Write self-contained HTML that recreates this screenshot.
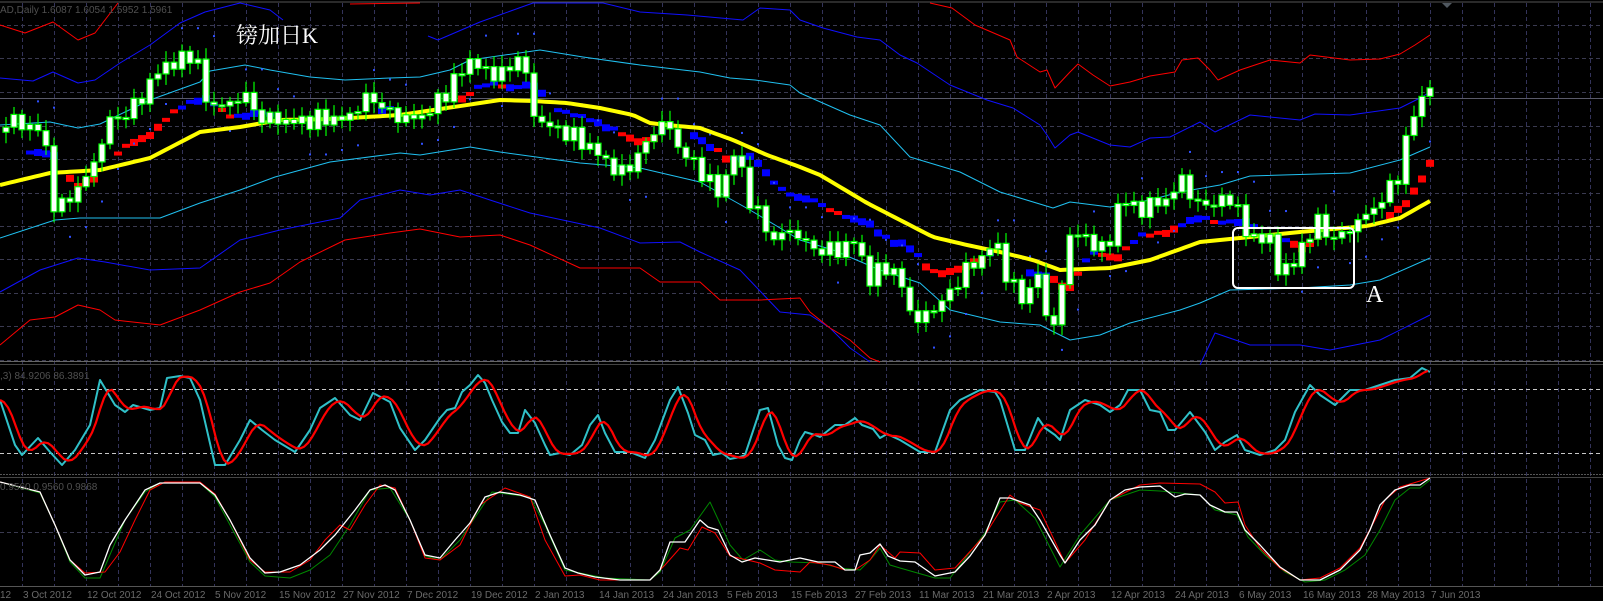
<!DOCTYPE html>
<html><head><meta charset="utf-8">
<style>
html,body{margin:0;padding:0;background:#000;width:1603px;height:601px;overflow:hidden}
svg{display:block}
</style></head>
<body>
<svg id="s" width="1603" height="601" viewBox="0 0 1603 601" xmlns="http://www.w3.org/2000/svg" font-family="Liberation Sans, sans-serif">
<rect width="1603" height="601" fill="#000"/>
<g id="grid"></g>
<line x1="0" y1="2" x2="1603" y2="2" stroke="#555" stroke-width="1"/>
<line x1="0" y1="98.5" x2="1603" y2="98.5" stroke="#5a5a6a" stroke-width="1"/>
<line x1="0" y1="361.5" x2="1603" y2="361.5" stroke="#666" stroke-width="1"/>
<line x1="0" y1="364.5" x2="1603" y2="364.5" stroke="#444" stroke-width="1"/>
<line x1="0" y1="474.5" x2="1603" y2="474.5" stroke="#555" stroke-width="1" stroke-dasharray="2,1"/>
<line x1="0" y1="477.5" x2="1603" y2="477.5" stroke="#444" stroke-width="1"/>
<line x1="0" y1="586.5" x2="1603" y2="586.5" stroke="#555" stroke-width="1"/>
<line x1="0" y1="389.5" x2="1603" y2="389.5" stroke="#c8c8c8" stroke-width="1" stroke-dasharray="4,3"/>
<line x1="0" y1="453.5" x2="1603" y2="453.5" stroke="#c8c8c8" stroke-width="1" stroke-dasharray="4,3"/>
<polygon points="1442,3 1452,3 1447,8" fill="#505860"/>
<g id="main"></g>
<text x="0" y="13" font-size="10" fill="#505050">AD,Daily  1.6087  1.6054  1.5952  1.5961</text>
<text x="0" y="379" font-size="10" fill="#505050">,3) 84.9206 86.3891</text>
<text x="0" y="490" font-size="10" fill="#505050">0.9560 0.9560 0.9868</text>
<text x="236" y="43" font-size="22" fill="#fff" style="font-family:'Liberation Serif','Noto Serif CJK SC',serif">镑加日K</text>
<text x="1366" y="302" font-size="24" fill="#fff" style="font-family:'Liberation Serif',serif">A</text>
<rect x="1233" y="228" width="121" height="60" rx="5" fill="none" stroke="#fff" stroke-width="2"/>
<g id="dates" font-size="10" fill="#6a6a6a"></g>
</svg>
<script>
var NS="http://www.w3.org/2000/svg";
function el(p,t,a){var e=document.createElementNS(NS,t);for(var k in a)e.setAttribute(k,a[k]);p.appendChild(e);return e;}
var G=document.getElementById('grid'),M=document.getElementById('main'),D=document.getElementById('dates');
for(var x=22;x<1603;x+=32){el(G,'line',{x1:x+.5,y1:3,x2:x+.5,y2:586,stroke:'#33335a','stroke-dasharray':'4,3'});}
[25,58,92,126,159,193,226,259,293,326,360,532].forEach(function(y){el(G,'line',{x1:0,y1:y+.5,x2:1603,y2:y+.5,stroke:'#3a3a50','stroke-dasharray':'4,3'});});
var dl=["3 Oct 2012","12 Oct 2012","24 Oct 2012","5 Nov 2012","15 Nov 2012","27 Nov 2012","7 Dec 2012","19 Dec 2012","2 Jan 2013","14 Jan 2013","24 Jan 2013","5 Feb 2013","15 Feb 2013","27 Feb 2013","11 Mar 2013","21 Mar 2013","2 Apr 2013","12 Apr 2013","24 Apr 2013","6 May 2013","16 May 2013","28 May 2013","7 Jun 2013"];
el(D,'text',{x:0,y:598}).textContent="12";
dl.forEach(function(t,i){var e=el(D,'text',{x:22+64*i+1,y:598});e.textContent=t;});
function P(a,c,w,p){var s=[];for(var i=0;i<a.length;i+=2)s.push(a[i]+','+a[i+1]);el(p||M,'polyline',{points:s.join(' '),fill:'none',stroke:c,'stroke-width':w,'stroke-linejoin':'round'});}
function interp(a,x){if(x<=a[0])return a[1];for(var i=0;i<a.length-2;i+=2){if(x<=a[i+2]){var t=(x-a[i])/(a[i+2]-a[i]);return a[i+1]+t*(a[i+3]-a[i+1]);}}return a[a.length-1];}
P([0,25,25,33,53,22,78,40,95,33,108,16,118,3],'#ff0000',1);
P([350,4,420,3],'#ff0000',1);
P([930,3,952,8,975,25,1010,40,1017,57,1040,72,1047,70,1055,88,1070,72,1078,64,1093,75,1110,86,1130,82,1150,76,1175,72,1182,60,1198,58,1210,70,1218,80,1240,70,1270,60,1300,63,1310,55,1350,60,1380,59,1400,54,1415,45,1430,35],'#ff0000',1);
P([0,78,33,81,53,72,78,83,95,80,120,63,150,45,180,23,205,12,240,3,270,10,283,20],'#1010ff',1);
P([428,36,438,40,480,22,533,3,603,3,640,12,687,15,743,20,760,8,790,10,800,20,823,28,857,37,880,40,900,55,917,63,950,85,987,100,1013,108,1040,125,1047,135,1055,148,1070,135,1078,132,1110,145,1130,147,1150,138,1170,137,1200,122,1215,132,1250,115,1300,120,1315,114,1350,115,1400,108,1420,98,1430,92],'#1010ff',1);
P([0,125,50,122,78,128,100,124,150,100,200,82,210,71,245,65,270,70,310,77,345,80,390,78,420,77,450,70,470,60,540,50,583,57,640,65,700,72,730,78,755,80,790,85,800,93,850,115,880,125,910,157,960,172,1000,192,1053,208,1070,202,1110,207,1150,200,1180,192,1220,185,1250,176,1350,173,1400,160,1430,147],'#20c0f0',1);
P([0,238,55,220,80,218,160,218,200,203,240,190,275,177,330,162,400,153,420,155,470,147,500,152,580,163,640,168,700,182,750,210,800,240,833,250,880,270,920,283,950,310,1000,322,1040,325,1070,340,1100,335,1130,323,1180,310,1200,303,1230,290,1300,288,1350,285,1380,280,1430,258],'#20c0f0',1);
P([0,292,40,270,78,258,105,262,150,270,200,268,240,240,280,230,340,218,360,200,400,190,430,195,460,190,490,200,530,213,600,228,640,243,680,242,700,252,740,270,780,312,810,315,830,328,850,348,870,362],'#1010ff',1);
P([1200,365,1215,333,1250,345,1300,345,1330,350,1380,340,1430,315],'#1010ff',1);
P([0,345,30,320,55,317,78,305,100,310,115,320,160,325,200,310,240,292,270,283,300,262,345,240,390,233,420,229,460,237,500,235,530,245,580,268,640,268,660,282,700,282,720,300,760,300,800,298,810,312,830,328,850,340,870,358,880,362],'#ff0000',1);
var C=[5,118,20,125,40,128,48,160,55,210,65,205,75,190,85,180,95,160,110,120,125,115,140,100,155,75,165,65,180,62,195,50,205,100,215,105,230,105,245,92,255,115,275,120,300,122,325,118,345,120,370,95,385,110,400,118,420,118,440,100,455,80,470,60,490,75,510,70,522,45,530,110,545,125,560,130,580,140,600,155,620,175,635,160,655,130,665,120,680,150,700,170,720,195,735,150,750,200,773,240,790,230,815,250,840,250,855,240,870,280,885,265,900,280,915,325,930,310,945,300,955,285,965,270,980,260,995,240,1010,285,1025,300,1040,270,1047,325,1055,320,1062,290,1070,232,1078,235,1094,245,1110,245,1118,205,1127,200,1134,210,1150,205,1166,200,1182,180,1198,205,1206,205,1222,200,1238,205,1247,240,1262,235,1271,245,1279,270,1294,265,1302,245,1318,222,1334,240,1350,228,1366,215,1382,200,1398,175,1414,112,1430,85];
var MA=[0,185,50,173,100,170,150,158,200,132,240,127,280,120,333,119,400,115,467,105,500,100,533,101,567,103,600,108,633,115,650,123,667,125,700,128,733,140,767,155,800,167,820,175,867,203,933,237,967,245,1000,252,1033,260,1060,270,1110,268,1150,260,1200,242,1300,232,1367,226,1400,218,1430,201];
var closes=[],xs=[];
for(var x=6;x<=1430;x+=8){xs.push(x);closes.push(interp(C,x)+6*Math.sin(x*0.37)+4*Math.sin(x*1.3));}
for(var i=3;i<xs.length;i++){var x=xs[i];var sm=(closes[i-1]+closes[i-2]+closes[i-3])/3;var ma=interp(MA,x);var y=(sm*0.45+ma*0.55);var up=interp(C,x+16)<interp(C,x-16);
 if(Math.abs(sm-ma)>12) el(M,'rect',{x:x-4,y:y-3,width:8,height:(Math.abs(interp(C,x+8)-interp(C,x-8))>12?7:4),fill:up?'#ff0000':'#0000ff'});
 if(i%2==0){var dy=up?Math.max(closes[i],closes[i-1],closes[i-2])+24:Math.min(closes[i],closes[i-1],closes[i-2])-24;
 el(M,'rect',{x:x-1,y:dy,width:2,height:2,fill:'#3050ff'});}}
P((function(){var a=[];for(var x=0;x<=1430;x+=5)a.push(x,interp(MA,x));return a;})(),'#ffff00',4);
for(var i=0;i<xs.length;i++){var x=xs[i],c=closes[i],o=i?closes[i-1]:c+5;var t=Math.min(o,c),b=Math.max(o,c);if(b-t<2){b=t+2;}
 var h=t-4-7*Math.abs(Math.sin(x*0.71)),l=b+4+7*Math.abs(Math.cos(x*0.53));
 el(M,'line',{x1:x,y1:h,x2:x,y2:l,stroke:'#00ff00','stroke-width':1.2});
 el(M,'rect',{x:x-3,y:t,width:6,height:b-t,fill:'#fff',stroke:'#00ff00','stroke-width':1.2});}
var CY=[0,400,15,445,22,455,38,438,50,452,62,465,75,450,90,425,100,380,115,405,125,412,133,405,150,410,160,408,167,378,180,376,190,378,200,400,215,465,225,465,240,440,250,420,262,430,275,440,295,452,310,430,320,408,335,398,350,415,360,420,373,393,390,402,400,428,415,450,425,440,440,418,447,410,455,408,462,392,470,385,478,375,485,383,492,400,502,422,510,433,518,433,525,410,535,423,545,445,550,455,560,453,570,455,582,445,590,425,598,415,605,433,615,452,630,452,645,458,655,440,670,400,678,387,688,413,695,435,705,440,713,455,722,453,730,459,740,457,745,455,755,425,760,410,768,408,778,445,785,458,792,460,800,440,805,432,815,435,820,437,835,425,845,425,855,418,862,425,873,429,880,438,887,434,900,440,920,452,935,452,950,410,960,400,980,390,995,392,1000,400,1015,450,1025,450,1038,418,1045,428,1055,435,1060,440,1070,410,1085,400,1100,405,1110,412,1120,405,1128,390,1140,390,1150,410,1160,412,1168,430,1175,430,1190,412,1205,432,1215,450,1225,442,1237,435,1245,450,1260,455,1275,450,1285,440,1295,412,1310,385,1320,395,1335,405,1350,390,1365,390,1380,385,1395,380,1410,378,1422,368,1430,372];
P(CY,'#30c0c8',2);
var R=[];for(var x=0;x<=1430;x+=4){var s=0,n=0;for(var k=0;k<=14;k+=2){s+=interp(CY,x-k);n++;}R.push(x,s/n);}
P(R,'#ff0000',2.2);
var W=[0,482,40,492,55,525,70,560,85,575,100,572,110,545,125,520,145,490,160,483,200,483,215,495,230,520,250,558,265,573,280,572,300,565,320,550,335,535,355,510,370,490,385,485,395,490,410,520,425,555,440,558,455,540,470,523,485,497,500,492,520,495,535,500,550,535,565,568,578,573,595,577,620,580,650,580,660,570,670,542,685,542,700,520,708,527,718,530,730,555,742,562,755,558,780,562,800,558,818,562,835,562,845,570,855,570,860,555,870,553,880,544,888,556,900,561,915,562,935,576,955,572,970,556,985,535,1000,498,1010,498,1030,505,1040,520,1060,555,1065,563,1080,540,1095,525,1110,500,1125,490,1140,487,1160,486,1175,497,1185,494,1200,495,1210,505,1225,512,1237,512,1245,530,1260,545,1280,567,1300,580,1320,580,1340,570,1360,550,1370,530,1380,505,1395,490,1410,485,1420,485,1430,478];
var RD=[0,482,40,492,55,525,70,560,85,573,105,572,120,552,135,520,150,490,165,482,200,482,215,494,230,520,250,560,265,572,290,572,310,560,325,540,340,525,350,530,365,505,380,485,395,488,410,520,425,558,440,560,460,545,480,505,505,488,530,497,545,540,565,576,580,575,600,580,650,580,665,565,680,548,688,550,702,527,715,533,730,556,760,563,775,570,800,572,810,562,830,565,845,570,855,570,870,560,880,545,895,558,900,552,920,553,935,570,955,568,985,535,1010,495,1020,503,1040,510,1065,563,1085,540,1110,500,1140,485,1160,483,1200,484,1215,492,1225,503,1238,502,1245,525,1260,548,1280,568,1300,580,1320,578,1340,568,1360,548,1375,520,1385,500,1400,487,1430,478];
var GR=[0,482,40,493,55,525,70,562,85,578,100,578,112,550,125,520,145,492,160,483,200,483,215,497,230,525,250,562,265,576,290,578,310,570,330,555,350,525,370,490,390,488,410,520,425,556,440,560,460,540,492,492,530,497,545,525,565,570,580,573,605,578,650,580,660,572,675,538,690,530,710,502,730,545,743,560,760,550,775,560,790,562,820,563,840,568,860,570,870,560,880,548,890,565,900,568,935,578,950,578,985,533,1000,502,1015,500,1035,518,1060,567,1080,535,1110,500,1140,490,1160,491,1200,495,1215,510,1237,515,1248,537,1265,555,1285,572,1305,582,1325,580,1345,570,1365,555,1380,530,1395,500,1410,488,1420,488,1430,480];
P(GR,'#008800',1);P(RD,'#ff0000',1);P(W,'#ffffff',1.3);
</script>
</body></html>
